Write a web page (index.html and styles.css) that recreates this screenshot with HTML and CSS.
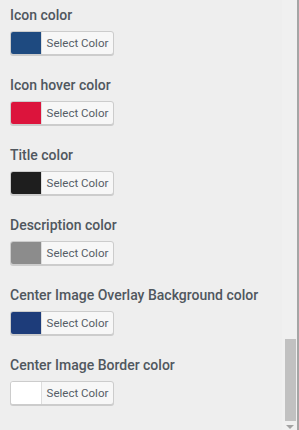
FILE: index.html
```html
<!DOCTYPE html>
<html lang="en">
<head>
  <meta charset="UTF-8" />
  <meta name="viewport" content="width=device-width, initial-scale=1.0"/>
  <title>Color settings</title>
  <link rel="stylesheet" href="styles.css">
</head>
<body>
  <div class="frame">
    <div class="panel">
      <div class="field">
        <div class="field-label">Icon color</div>
        <button class="color-btn" type="button"><span class="swatch swatch-blue"></span><span class="btn-text">Select Color</span></button>
      </div>
      <div class="field">
        <div class="field-label">Icon hover color</div>
        <button class="color-btn" type="button"><span class="swatch swatch-red"></span><span class="btn-text">Select Color</span></button>
      </div>
      <div class="field">
        <div class="field-label">Title color</div>
        <button class="color-btn" type="button"><span class="swatch swatch-black"></span><span class="btn-text">Select Color</span></button>
      </div>
      <div class="field">
        <div class="field-label">Description color</div>
        <button class="color-btn" type="button"><span class="swatch swatch-gray"></span><span class="btn-text">Select Color</span></button>
      </div>
      <div class="field">
        <div class="field-label">Center Image Overlay Background color</div>
        <button class="color-btn" type="button"><span class="swatch swatch-navy"></span><span class="btn-text">Select Color</span></button>
      </div>
      <div class="field">
        <div class="field-label">Center Image Border color</div>
        <button class="color-btn" type="button"><span class="swatch swatch-white"></span><span class="btn-text">Select Color</span></button>
      </div>
    </div>
    <div class="scrollbar">
      <div class="thumb"></div>
      <div class="arrow"></div>
    </div>
  </div>
</body>
</html>
```

FILE: styles.css
```css
* {
  box-sizing: border-box;
}

html, body {
  height: 100%;
}

body {
  margin: 0;
  background: #eeeeee;
  font-family: Roboto, 'Noto Sans', sans-serif;
  color: #50575e;
  overflow: hidden;
}

.frame {
  display: flex;
  height: 430px;
  border-right: 2px solid #a5a5a5;
}

.panel {
  flex: 1;
  padding: 6px 0 0 10px;
}

.field {
  margin-bottom: 21px;
}

.field-label {
  font-size: 14px;
  font-weight: 500;
  line-height: 18px;
  margin-bottom: 7px;
  white-space: nowrap;
}

.color-btn {
  display: flex;
  align-items: stretch;
  width: 104px;
  height: 24px;
  padding: 0;
  border: 1px solid #cccccc;
  border-radius: 3px;
  background: #f7f7f7;
  box-shadow: 0 1px 0 #cccccc;
  cursor: pointer;
  font-family: inherit;
}

.swatch {
  width: 31px;
  border-right: 1px solid #dddddd;
  border-radius: 2px 0 0 2px;
}

.swatch-blue { background: #1e4a80; }
.swatch-red { background: #dc143c; }
.swatch-black { background: #1e1e1e; }
.swatch-gray { background: #8c8c8c; }
.swatch-navy { background: #1d3c7a; }
.swatch-white { background: #ffffff; }

.btn-text {
  flex: 1;
  font-size: 11.5px;
  line-height: 22px;
  color: #555d66;
  text-align: center;
}

.scrollbar {
  width: 15px;
  display: flex;
  flex-direction: column;
  align-items: center;
  background: #f0f0f0;
  padding-bottom: 1px;
}

.thumb {
  margin-top: auto;
  width: 11px;
  height: 82px;
  background: #c1c1c1;
  margin-left: 1px;
}

.arrow {
  margin-top: 4px;
  width: 0;
  height: 0;
  border-left: 4px solid transparent;
  border-right: 4px solid transparent;
  border-top: 4px solid #a3a3a3;
}
```
